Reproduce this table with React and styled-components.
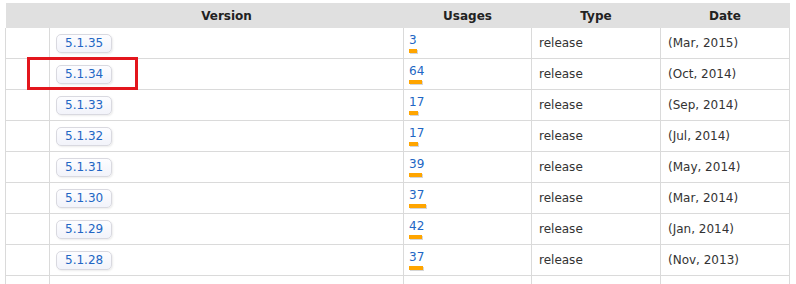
import React from "react";
import styled, { createGlobalStyle } from "styled-components";

const versions = [
  { version: "5.1.35", usages: 3, bar: 8, date: "(Mar, 2015)" },
  { version: "5.1.34", usages: 64, bar: 13, date: "(Oct, 2014)" },
  { version: "5.1.33", usages: 17, bar: 9, date: "(Sep, 2014)" },
  { version: "5.1.32", usages: 17, bar: 9, date: "(Jul, 2014)" },
  { version: "5.1.31", usages: 39, bar: 13, date: "(May, 2014)" },
  { version: "5.1.30", usages: 37, bar: 17, date: "(Mar, 2014)" },
  { version: "5.1.29", usages: 42, bar: 13, date: "(Jan, 2014)" },
  { version: "5.1.28", usages: 37, bar: 14, date: "(Nov, 2013)" },
];

function App() {
  return (
    <>
      <GlobalStyle />
      <Page>
        <TableWrap>
          <Grid>
            <colgroup>
              <col style={{ width: 44 }} />
              <col style={{ width: 354 }} />
              <col style={{ width: 128 }} />
              <col style={{ width: 129 }} />
              <col style={{ width: 129 }} />
            </colgroup>
            <thead>
              <tr>
                <HeadCell />
                <HeadCell>Version</HeadCell>
                <HeadCell>Usages</HeadCell>
                <HeadCell>Type</HeadCell>
                <HeadCell>Date</HeadCell>
              </tr>
            </thead>
            <tbody>
              {versions.map((v) => (
                <tr key={v.version}>
                  <Cell />
                  <Cell>
                    <VersionBadge href="#">{v.version}</VersionBadge>
                  </Cell>
                  <UsageCell>
                    <UsageLink href="#">{v.usages}</UsageLink>
                    <UsageBar style={{ width: v.bar }} />
                  </UsageCell>
                  <Cell>release</Cell>
                  <Cell>{v.date}</Cell>
                </tr>
              ))}
              <tr>
                <Cell />
                <Cell />
                <Cell />
                <Cell />
                <Cell />
              </tr>
            </tbody>
          </Grid>
          <Highlight />
        </TableWrap>
      </Page>
    </>
  );
}

const GlobalStyle = createGlobalStyle`
  html, body {
    margin: 0;
    background: #fff;
    overflow: hidden;
  }
  body {
    font-family: Verdana, "DejaVu Sans", sans-serif;
    font-size: 12px;
    color: #333;
  }
`;

const Page = styled.div`
  padding: 3px 0 0 5px;
  height: 281px;
  overflow: hidden;
`;

const TableWrap = styled.div`
  position: relative;
  width: 784px;
`;

const Grid = styled.table`
  width: 784px;
  border-collapse: collapse;
  table-layout: fixed;
`;

const HeadCell = styled.th`
  height: 25px;
  padding: 0;
  background: #e0e0e0;
  color: #222;
  font-weight: bold;
  font-size: 12px;
  text-align: center;
  vertical-align: middle;
`;

const Cell = styled.td`
  height: 30px;
  padding: 0 0 0 7px;
  border: 1px solid #dadada;
  border-top: none;
  vertical-align: middle;
  white-space: nowrap;
  &:first-child {
    padding: 0;
  }
`;

const UsageCell = styled(Cell)`
  height: 25px;
  vertical-align: top;
  padding: 5px 0 0 5px;
`;

const VersionBadge = styled.a`
  display: inline-block;
  box-sizing: border-box;
  height: 19px;
  line-height: 17px;
  padding: 0 8px;
  margin-left: -1px;
  border: 1px solid #d9d9e0;
  border-radius: 5px;
  background: linear-gradient(#fdfdff, #f2f3fa);
  box-shadow: 1px 1px 2px rgba(0, 0, 0, 0.08);
  color: #2266c4;
  text-decoration: none;
  font-size: 12px;
`;

const UsageLink = styled.a`
  display: block;
  line-height: 14px;
  color: #2266c4;
  text-decoration: none;
  font-size: 12px;
`;

const UsageBar = styled.div`
  height: 4px;
  margin-top: 2px;
  background: #ffa500;
  box-shadow: 1px 1px 0 rgba(120, 120, 120, 0.3);
`;

const Highlight = styled.div`
  position: absolute;
  left: 22px;
  top: 54px;
  width: 111px;
  height: 33px;
  box-sizing: border-box;
  border: 3px solid #e3161d;
  pointer-events: none;
`;

export default App;
